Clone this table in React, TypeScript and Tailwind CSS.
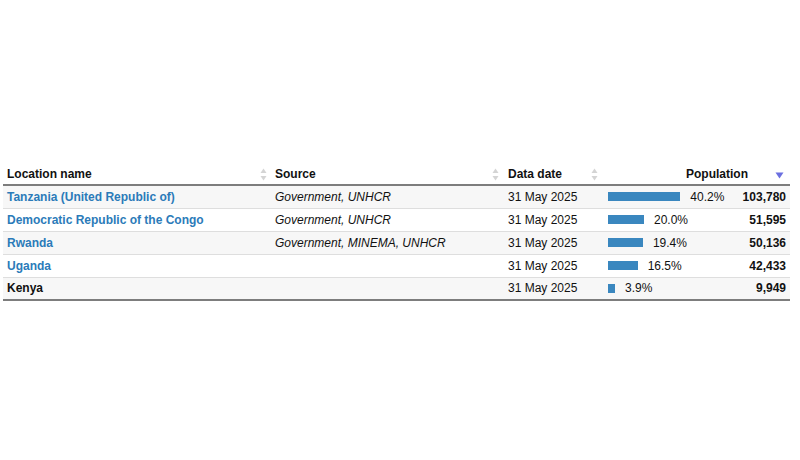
const ROWS: ReadonlyArray<{
	name: string;
	link: boolean;
	source: string;
	date: string;
	pct: number;
	value: string;
}> = [
	{ name: "Tanzania (United Republic of)", link: true, source: "Government, UNHCR", date: "31 May 2025", pct: 40.2, value: "103,780" },
	{ name: "Democratic Republic of the Congo", link: true, source: "Government, UNHCR", date: "31 May 2025", pct: 20.0, value: "51,595" },
	{ name: "Rwanda", link: true, source: "Government, MINEMA, UNHCR", date: "31 May 2025", pct: 19.4, value: "50,136" },
	{ name: "Uganda", link: true, source: "", date: "31 May 2025", pct: 16.5, value: "42,433" },
	{ name: "Kenya", link: false, source: "", date: "31 May 2025", pct: 3.9, value: "9,949" },
];

function SortIcon() {
	return (
		<svg width="7" height="13" viewBox="0 0 7 13" className="shrink-0">
			<path d="M3.5 0.5 L6.5 5 L0.5 5 Z" fill="#d4d4d4" />
			<path d="M3.5 12.5 L6.5 8 L0.5 8 Z" fill="#d4d4d4" />
		</svg>
	);
}

function SortDesc() {
	return (
		<svg width="9" height="7" viewBox="0 0 9 7" className="shrink-0">
			<path d="M0.5 0.5 L8.5 0.5 L4.5 6.5 Z" fill="#6b6fe0" />
		</svg>
	);
}

export default function App() {
	return (
		<div className="h-[460px] w-[800px] bg-white pt-[164px] pl-[3px] font-['Liberation_Sans',Arial,sans-serif] text-[12px] text-[#111]">
			<table className="w-[787px] table-fixed border-collapse">
				<colgroup>
					<col className="w-[267px]" />
					<col className="w-[233px]" />
					<col className="w-[98px]" />
					<col className="w-[189px]" />
				</colgroup>
				<thead>
					<tr className="h-[21px] border-b-2 border-[#7d7d7d]">
						<th className="p-0 pl-[4px] text-left font-bold">
							<div className="flex items-center justify-between pr-[3px]">
								<span>Location name</span>
								<SortIcon />
							</div>
						</th>
						<th className="p-0 pl-[5px] text-left font-bold">
							<div className="flex items-center justify-between pr-[4px]">
								<span>Source</span>
								<SortIcon />
							</div>
						</th>
						<th className="p-0 pl-[5px] text-left font-bold">
							<div className="flex items-center justify-between pr-[3px]">
								<span>Data date</span>
								<SortIcon />
							</div>
						</th>
						<th className="p-0 text-right font-bold">
							<div className="flex items-center justify-end gap-[27px] pr-[6px]">
								<span>Population</span>
								<span className="pt-[3px]">
									<SortDesc />
								</span>
							</div>
						</th>
					</tr>
				</thead>
				<tbody>
					{ROWS.map((row, i) => (
						<tr
							key={row.name}
							className={`h-[23px] border-b border-[#dedede] last:border-b-2 last:border-[#7d7d7d] ${i % 2 === 0 ? "bg-[#f7f7f7]" : "bg-white"}`}
						>
							<td className={`p-0 pl-[4px] font-bold ${row.link ? "text-[#2b7bb9]" : "text-[#111]"}`}>
								{row.name}
							</td>
							<td className="p-0 pl-[5px] italic">{row.source}</td>
							<td className="p-0 pl-[5px]">{row.date}</td>
							<td className="p-0 pl-[7px] pr-[4px]">
								<div className="flex items-center">
									<div
										className="h-[9px] bg-[#3a87bf]"
										style={{ width: `${row.pct * 1.8}px` }}
									/>
									<span className="ml-[10px]">{row.pct.toFixed(1)}%</span>
									<span className="ml-auto font-bold">{row.value}</span>
								</div>
							</td>
						</tr>
					))}
				</tbody>
			</table>
		</div>
	);
}
